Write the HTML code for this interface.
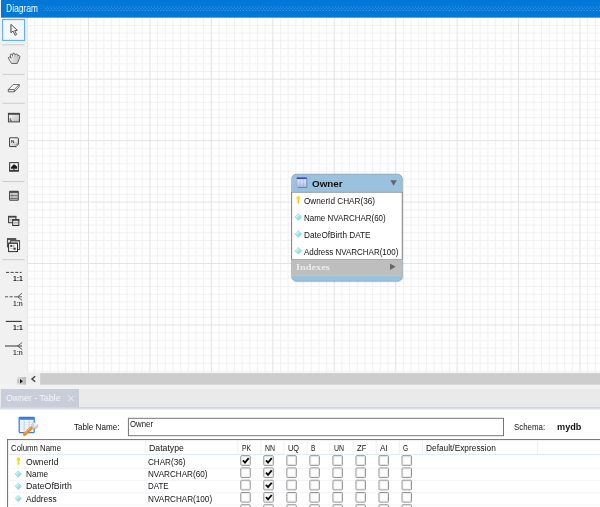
<!DOCTYPE html>
<html lang="en">
<head>
<meta charset="utf-8">
<title>Diagram - Owner - Table</title>
<style>
html,body{margin:0;padding:0;background:#fff;}
body{width:600px;height:507px;position:relative;overflow:hidden;font-family:"Liberation Sans",sans-serif;}
#bg{position:absolute;left:0;top:0;width:600px;height:507px;display:block;}
.t{position:absolute;white-space:pre;line-height:12px;height:12px;transform-origin:0 0;font-family:"Liberation Sans",sans-serif;}
.grp{position:absolute;left:0;top:0;width:0;height:0;will-change:transform;}
</style>
</head>
<body>
<svg id="bg" width="600" height="507" viewBox="0 0 600 507"><defs>
<linearGradient id="gLayer" x1="0" y1="0" x2="1" y2="1"><stop offset="0" stop-color="#ffffff"/><stop offset="1" stop-color="#b8b8b8"/></linearGradient>
<linearGradient id="gIcon" x1="0" y1="0" x2="0" y2="1"><stop offset="0" stop-color="#ffffff"/><stop offset="1" stop-color="#d0d0d0"/></linearGradient>
<linearGradient id="gHand" x1="0" y1="0" x2="1" y2="0.3"><stop offset="0" stop-color="#ffffff"/><stop offset="1" stop-color="#c4c4c4"/></linearGradient>
<linearGradient id="gTblHead" x1="0" y1="0" x2="0" y2="1"><stop offset="0" stop-color="#1e6ee0"/><stop offset="1" stop-color="#5aa2f2"/></linearGradient>
<linearGradient id="gNote" x1="0" y1="0" x2="1" y2="1"><stop offset="0.3" stop-color="#ffffff"/><stop offset="1" stop-color="#bdbdbd"/></linearGradient>
<linearGradient id="gTIcon" x1="0" y1="0" x2="1" y2="1"><stop offset="0" stop-color="#f6f6f6"/><stop offset="1" stop-color="#bcbcbc"/></linearGradient>
<linearGradient id="gExp" x1="0" y1="0" x2="1" y2="0"><stop offset="0" stop-color="#e6e6e6"/><stop offset="0.6" stop-color="#c6c6c6"/><stop offset="1" stop-color="#bcbcbc"/></linearGradient>
<linearGradient id="gBand" x1="0" y1="0" x2="0" y2="1"><stop offset="0" stop-color="#cdd3df"/><stop offset="1" stop-color="#e4e8ef"/></linearGradient>
<linearGradient id="gDia" x1="0" y1="0" x2="1" y2="1"><stop offset="0" stop-color="#f2ffff"/><stop offset="1" stop-color="#52d4da"/></linearGradient>
<linearGradient id="gKey" x1="0" y1="0" x2="1" y2="0"><stop offset="0" stop-color="#fff27a"/><stop offset="0.55" stop-color="#ffdd22"/><stop offset="1" stop-color="#e9b400"/></linearGradient>
<linearGradient id="gTbl" x1="0" y1="0" x2="0" y2="1"><stop offset="0" stop-color="#eef4ff"/><stop offset="1" stop-color="#a9c0e6"/></linearGradient>
<clipPath id="entClip"><rect x="291.5" y="174.1" width="110.9" height="107.2" rx="5" ry="5"/></clipPath>
</defs><g id="s-canvas"><rect x="27" y="17" width="573" height="355.4" fill="#ffffff" /><line x1="27.5" y1="17" x2="27.5" y2="372.4" stroke="#e6e6e6" stroke-width="1"/><path d="M34.74 17.0V372.4M42.42 17.0V372.4M50.10 17.0V372.4M57.78 17.0V372.4M65.46 17.0V372.4M73.14 17.0V372.4M80.82 17.0V372.4M96.18 17.0V372.4M103.86 17.0V372.4M111.54 17.0V372.4M119.22 17.0V372.4M126.90 17.0V372.4M134.58 17.0V372.4M142.26 17.0V372.4M157.62 17.0V372.4M165.30 17.0V372.4M172.98 17.0V372.4M180.66 17.0V372.4M188.34 17.0V372.4M196.02 17.0V372.4M203.70 17.0V372.4M219.06 17.0V372.4M226.74 17.0V372.4M234.42 17.0V372.4M242.10 17.0V372.4M249.78 17.0V372.4M257.46 17.0V372.4M265.14 17.0V372.4M280.50 17.0V372.4M288.18 17.0V372.4M295.86 17.0V372.4M303.54 17.0V372.4M311.22 17.0V372.4M318.90 17.0V372.4M326.58 17.0V372.4M341.94 17.0V372.4M349.62 17.0V372.4M357.30 17.0V372.4M364.98 17.0V372.4M372.66 17.0V372.4M380.34 17.0V372.4M388.02 17.0V372.4M403.38 17.0V372.4M411.06 17.0V372.4M418.74 17.0V372.4M426.42 17.0V372.4M434.10 17.0V372.4M441.78 17.0V372.4M449.46 17.0V372.4M464.82 17.0V372.4M472.50 17.0V372.4M480.18 17.0V372.4M487.86 17.0V372.4M495.54 17.0V372.4M503.22 17.0V372.4M510.90 17.0V372.4M526.26 17.0V372.4M533.94 17.0V372.4M541.62 17.0V372.4M549.30 17.0V372.4M556.98 17.0V372.4M564.66 17.0V372.4M572.34 17.0V372.4M587.70 17.0V372.4M595.38 17.0V372.4M27.0 25.44H600M27.0 33.12H600M27.0 40.80H600M27.0 48.48H600M27.0 56.16H600M27.0 63.84H600M27.0 71.52H600M27.0 86.88H600M27.0 94.56H600M27.0 102.24H600M27.0 109.92H600M27.0 117.60H600M27.0 125.28H600M27.0 132.96H600M27.0 148.32H600M27.0 156.00H600M27.0 163.68H600M27.0 171.36H600M27.0 179.04H600M27.0 186.72H600M27.0 194.40H600M27.0 209.76H600M27.0 217.44H600M27.0 225.12H600M27.0 232.80H600M27.0 240.48H600M27.0 248.16H600M27.0 255.84H600M27.0 271.20H600M27.0 278.88H600M27.0 286.56H600M27.0 294.24H600M27.0 301.92H600M27.0 309.60H600M27.0 317.28H600M27.0 332.64H600M27.0 340.32H600M27.0 348.00H600M27.0 355.68H600M27.0 363.36H600M27.0 371.04H600" stroke="#efefef" stroke-width="0.9" fill="none"/><path d="M88.50 17.0V372.4M149.94 17.0V372.4M211.38 17.0V372.4M272.82 17.0V372.4M334.26 17.0V372.4M395.70 17.0V372.4M457.14 17.0V372.4M518.58 17.0V372.4M580.02 17.0V372.4M27.0 79.20H600M27.0 140.64H600M27.0 202.08H600M27.0 263.52H600M27.0 324.96H600" stroke="#e3e3e3" stroke-width="1" fill="none"/></g><g id="s-toolbar"><rect x="0" y="17" width="27" height="367.8" fill="#f1f1f1" /><rect x="0" y="0" width="1" height="17" fill="#f0f0f0" /><rect x="2.6" y="19.6" width="22" height="20.8" fill="#f4f8fd" stroke="#55a7f3" stroke-width="1"/><path d="M10.9 24.3V32.7L13.1 31.1L15.1 35.3L16.6 34.5L14.7 30.6L17.4 30.3Z" fill="#f4f4f4" stroke="#3c3c3c" stroke-width="0.85" stroke-linejoin="round"/><path d="M11.0 25.2V32" stroke="#8a8a8a" stroke-width="0.9"/><line x1="2.4" y1="44.8" x2="24.6" y2="44.8" stroke="#cfcfcf" stroke-width="1.1"/><line x1="2.4" y1="74.4" x2="24.6" y2="74.4" stroke="#cfcfcf" stroke-width="1.1"/><line x1="2.4" y1="103.3" x2="24.6" y2="103.3" stroke="#cfcfcf" stroke-width="1.1"/><line x1="2.4" y1="181.5" x2="24.6" y2="181.5" stroke="#cfcfcf" stroke-width="1.1"/><line x1="2.4" y1="259.6" x2="24.6" y2="259.6" stroke="#cfcfcf" stroke-width="1.1"/><path d="M8.2 57.7L9.5 56.8L10.9 58.3L10.2 54.7Q10.8 53.6 11.9 54.2L12.5 55.6L12.9 53.5Q14.0 52.7 14.8 53.6L15.1 54.9Q16.5 53.5 17.6 54.5L17.8 55.5Q19.3 55.0 19.9 56.3L19.4 58.6L17.2 63.5H11.6L9.6 60.4Z" fill="url(#gHand)" stroke="#4a4a4a" stroke-width="0.8" stroke-linejoin="round"/><path d="M12.5 55.6L12.9 58.2M15.1 54.9L15.0 57.8M17.8 55.5L17.2 58" stroke="#9a9a9a" stroke-width="0.5" fill="none"/><path d="M8.3 89.6L13.2 84.6H19.2L14.3 89.6Z" fill="#fafafa" stroke="#444" stroke-width="0.8" stroke-linejoin="round"/><path d="M8.3 89.6V91.8H14.3V89.6M14.3 91.8L19.2 86.8V84.6" fill="none" stroke="#444" stroke-width="0.8" stroke-linejoin="round"/><rect x="8.4" y="113.3" width="11" height="8.6" fill="url(#gLayer)" stroke="#333" stroke-width="0.9"/><path d="M8.4 114.1H19.4" stroke="#333" stroke-width="1.2"/><path d="M10.2 118.2V120.6H11.6" stroke="#333" stroke-width="0.8" fill="none"/><path d="M9.6 137.8H17.6Q18.4 137.8 18.4 138.6V144.2L16.1 146.6H9.6Z" fill="url(#gNote)" stroke="#3c3c3c" stroke-width="1.0" stroke-linejoin="round"/><path d="M18.4 144.2H16.1V146.6" fill="#e8e8e8" stroke="#555" stroke-width="0.6"/><line x1="10.8" y1="144" x2="15.2" y2="144" stroke="#b5b5b5" stroke-width="0.6"/><line x1="10.8" y1="145" x2="15.2" y2="145" stroke="#c2c2c2" stroke-width="0.6"/><rect x="9.6" y="162.6" width="8.8" height="8.6" fill="#ffffff" stroke="#3a3a3a" stroke-width="1.0"/><rect x="10.5" y="163.5" width="7" height="6.4" fill="none" stroke="#b8b8b8" stroke-width="0.5"/><path d="M11.0 168.7C10.5 167.2 11.4 166.2 12.2 166.2C12.4 164.0 15.4 163.7 15.9 165.8C17.1 165.9 17.5 167.6 16.9 168.7Z" fill="#1a1a1a"/><rect x="13.5" y="168.4" width="1" height="1.7" fill="#1a1a1a"/><line x1="9.6" y1="170.6" x2="18.4" y2="170.6" stroke="#3a3a3a" stroke-width="1.3"/><rect x="9.6" y="191.4" width="8.7" height="8.9" rx="0.7" fill="url(#gTIcon)" stroke="#454545" stroke-width="1.1"/><rect x="9.6" y="191.2" width="8.7" height="1.7" fill="#4a4a4a" /><line x1="10.4" y1="194.2" x2="17.6" y2="194.2" stroke="#b0b0b0" stroke-width="0.6"/><line x1="10.4" y1="197" x2="17.6" y2="197" stroke="#a8a8a8" stroke-width="0.6"/><line x1="10.4" y1="195.6" x2="17.6" y2="195.6" stroke="#555" stroke-width="0.8"/><line x1="10.4" y1="198.5" x2="17.6" y2="198.5" stroke="#555" stroke-width="0.8"/><line x1="12" y1="193.2" x2="12" y2="199.8" stroke="#777" stroke-width="0.7"/><rect x="8.6" y="216.4" width="7.3" height="6.3" fill="#ececec" stroke="#333" stroke-width="1.0"/><rect x="8.2" y="215.9" width="8.1" height="1.7" fill="#444" /><line x1="9.6" y1="219.3" x2="12.2" y2="219.3" stroke="#999" stroke-width="0.6"/><line x1="9.6" y1="220.7" x2="12.2" y2="220.7" stroke="#999" stroke-width="0.6"/><rect x="12.7" y="219.6" width="6.1" height="5.9" fill="#f2f2f2" stroke="#2e2e2e" stroke-width="1.0"/><rect x="12.2" y="219.1" width="7.1" height="1.7" fill="#3c3c3c" /><line x1="13.6" y1="222.4" x2="17.9" y2="222.4" stroke="#888" stroke-width="0.7"/><line x1="13.6" y1="223.9" x2="17.9" y2="223.9" stroke="#999" stroke-width="0.7"/><rect x="7.4" y="238.5" width="8.3" height="8.4" fill="#dcdcdc" stroke="#3a3a3a" stroke-width="0.9"/><rect x="7" y="238" width="9.1" height="2" fill="#555" /><rect x="10.7" y="240.6" width="8.9" height="8.8" fill="#ededed" stroke="#3a3a3a" stroke-width="0.9"/><rect x="10.3" y="240.1" width="9.7" height="1.3" fill="#555" /><rect x="8.6" y="243.2" width="8.9" height="8.4" fill="#f4f4f4" stroke="#2c2c2c" stroke-width="1.0"/><rect x="8.2" y="242.7" width="9.7" height="1.2" fill="#444" /><rect x="10.3" y="245.1" width="1.9" height="1.7" fill="#333" /><rect x="12.6" y="245.5" width="1.8" height="1" fill="#666" /><rect x="13.4" y="247.7" width="2.4" height="2" fill="#444" /><line x1="10.2" y1="248.6" x2="13" y2="248.6" stroke="#aaa" stroke-width="0.6"/><line x1="6" y1="272.4" x2="21.6" y2="272.4" stroke="#444" stroke-width="1" stroke-dasharray="3.1 1.5"/><line x1="5" y1="296.8" x2="19" y2="296.8" stroke="#555" stroke-width="1" stroke-dasharray="3.1 1.5"/><path d="M22 293.2L17.6 296.8L22 300.3M17.6 296.8H22" fill="none" stroke="#555" stroke-width="0.9"/><line x1="5.8" y1="321.4" x2="21.6" y2="321.4" stroke="#333" stroke-width="1.1"/><line x1="5" y1="346" x2="22" y2="346" stroke="#555" stroke-width="1.2"/><path d="M22.2 342.5L17.5 346L22.2 349.5" fill="none" stroke="#555" stroke-width="0.9"/><rect x="16.6" y="377" width="9.5" height="7.8" fill="url(#gExp)" /><rect x="17.6" y="379.4" width="1" height="3.6" fill="#a8a8a8" /><path d="M20.0 379.0L22.9 381.2L20.0 383.4Z" fill="#111"/></g><g id="s-header"><rect x="1" y="0" width="599" height="17.65" fill="#0078d7" /><line x1="43.4" y1="7.0" x2="600" y2="7.0" stroke="#459eea" stroke-width="1.05" stroke-dasharray="1.1 1.97"/><line x1="44.935" y1="8.75" x2="600" y2="8.75" stroke="#459eea" stroke-width="1.05" stroke-dasharray="1.1 1.97"/><line x1="43.4" y1="10.5" x2="600" y2="10.5" stroke="#459eea" stroke-width="1.05" stroke-dasharray="1.1 1.97"/></g><g id="s-scroll"><rect x="27" y="372.4" width="573" height="12.4" fill="#f0f0f0" /><rect x="40.2" y="373.1" width="559.8" height="11.7" fill="#cdcdcd" /><path d="M35.2 376.3L32.0 379.0L35.2 381.7" fill="none" stroke="#444" stroke-width="1.5"/><rect x="0" y="384.8" width="600" height="4.2" fill="#f2f2f2" /></g><g id="s-tabs"><rect x="0" y="389" width="600" height="18" fill="#eaeaea" /><rect x="1" y="389" width="78" height="18" fill="#c8cdd9" /><rect x="0" y="407" width="600" height="2.8" fill="url(#gBand)" /><path d="M68.3 395.6L73.9 401.2M73.9 395.6L68.3 401.2" stroke="#eceff4" stroke-width="0.95" fill="none"/></g><g id="s-entity"><rect x="292.5" y="175.29999999999998" width="110.89999999999998" height="107.20000000000002" rx="5.2" fill="#000" opacity="0.08"/><g clip-path="url(#entClip)"><rect x="291.5" y="174.1" width="110.9" height="18.1" fill="#9ac1dd" /><rect x="291.5" y="192.2" width="110.9" height="67.1" fill="#ffffff" /><rect x="291.5" y="259.3" width="110.9" height="16.4" fill="#bebebe" /><rect x="291.5" y="275.7" width="110.9" height="5.6" fill="#9ac1dd" /></g><line x1="291.5" y1="192.4" x2="402.4" y2="192.4" stroke="#8f8f8f" stroke-width="0.8"/><line x1="291.5" y1="259.5" x2="402.4" y2="259.5" stroke="#a2a2a2" stroke-width="0.8"/><rect x="291.5" y="174.1" width="110.89999999999998" height="107.20000000000002" rx="5" fill="none" stroke="#6f7f8c" stroke-width="0.8" opacity="0.55"/><line x1="291.6" y1="192.2" x2="291.6" y2="259.3" stroke="#7a7a7a" stroke-width="0.9"/><line x1="402.3" y1="192.2" x2="402.3" y2="259.3" stroke="#8a8a8a" stroke-width="0.9"/><rect x="297.6" y="178.2" width="9.7" height="9.7" fill="#4f6488" rx="0.8" opacity="0.75"/><rect x="296.9" y="177.5" width="9.6" height="9.6" rx="0.6" fill="url(#gTbl)" stroke="#8fa3cc" stroke-width="0.5"/><rect x="296.7" y="177.3" width="10" height="1.8" fill="#3f46dc" /><line x1="300.1" y1="179.3" x2="300.1" y2="186.9" stroke="#93a8d6" stroke-width="0.6"/><line x1="303.3" y1="179.3" x2="303.3" y2="186.9" stroke="#93a8d6" stroke-width="0.6"/><path d="M390.3 180.2H396.9L393.6 185.8Z" fill="#666"/><path d="M390.0 263.6L395.7 266.8L390.0 270.0Z" fill="#686868"/><rect x="296.95" y="199.2" width="1.9" height="4.4" fill="url(#gKey)"/><ellipse cx="297.9" cy="198" rx="1.95" ry="2.0" fill="url(#gKey)"/><rect x="298.5" y="201.6" width="0.9" height="0.8" fill="#e9b800"/><path d="M295 217L298.3 213.7L301.6 217L298.3 220.3Z" fill="url(#gDia)" stroke="#74c4ca" stroke-width="0.55"/><path d="M296.2 216.8L298.3 214.7" stroke="#ffffff" stroke-width="0.7" opacity="0.8"/><path d="M295 233.9L298.3 230.6L301.6 233.9L298.3 237.2Z" fill="url(#gDia)" stroke="#74c4ca" stroke-width="0.55"/><path d="M296.2 233.7L298.3 231.6" stroke="#ffffff" stroke-width="0.7" opacity="0.8"/><path d="M295 250.8L298.3 247.5L301.6 250.8L298.3 254.1Z" fill="url(#gDia)" stroke="#74c4ca" stroke-width="0.55"/><path d="M296.2 250.6L298.3 248.5" stroke="#ffffff" stroke-width="0.7" opacity="0.8"/></g><g id="s-panel"><rect x="0" y="409.8" width="600" height="97.2" fill="#ffffff" /><rect x="19.2" y="417.5" width="15" height="15.1" rx="0.8" fill="#f6f9ff" stroke="#3a80e2" stroke-width="1.3"/><rect x="18.8" y="417.1" width="15.8" height="2.8" fill="url(#gTblHead)" rx="0.8"/><line x1="24.2" y1="420.6" x2="24.2" y2="431.8" stroke="#a9c6ee" stroke-width="0.9"/><line x1="29.2" y1="420.6" x2="29.2" y2="431.8" stroke="#a9c6ee" stroke-width="0.9"/><line x1="20.4" y1="422.3" x2="33.2" y2="422.3" stroke="#cfe0f6" stroke-width="0.8"/><line x1="20.4" y1="424.6" x2="33.2" y2="424.6" stroke="#cfe0f6" stroke-width="0.8"/><line x1="20.4" y1="426.9" x2="33.2" y2="426.9" stroke="#cfe0f6" stroke-width="0.8"/><line x1="20.4" y1="429.2" x2="33.2" y2="429.2" stroke="#cfe0f6" stroke-width="0.8"/><path d="M24.5 434.4L31.4 427.9" stroke="#f08a1c" stroke-width="3.3" stroke-linecap="round"/><path d="M24.3 433.6L30.6 427.7" stroke="#ffb45a" stroke-width="0.8" stroke-linecap="round"/><circle cx="34.6" cy="425.7" r="3.0" fill="#d4d4d4" stroke="#a8a8a8" stroke-width="0.6"/><path d="M34.6 425.6L37.4 422.4" stroke="#ffffff" stroke-width="1.9"/><path d="M32.4 424.4Q33.2 423 34.6 423" stroke="#ffffff" stroke-width="0.7" fill="none"/><rect x="128.4" y="418.3" width="375.1" height="17.4" fill="#ffffff" stroke="#6f6f6f" stroke-width="0.95"/><line x1="7" y1="439.6" x2="600" y2="439.6" stroke="#666666" stroke-width="0.95"/><line x1="7.6" y1="439.3" x2="7.6" y2="507" stroke="#6a6a6a" stroke-width="1"/><line x1="145.3" y1="440.4" x2="145.3" y2="454.4" stroke="#e9eff9" stroke-width="1"/><line x1="237.8" y1="440.4" x2="237.8" y2="454.4" stroke="#e9eff9" stroke-width="1"/><line x1="261" y1="440.4" x2="261" y2="454.4" stroke="#e9eff9" stroke-width="1"/><line x1="284" y1="440.4" x2="284" y2="454.4" stroke="#e9eff9" stroke-width="1"/><line x1="307" y1="440.4" x2="307" y2="454.4" stroke="#e9eff9" stroke-width="1"/><line x1="330" y1="440.4" x2="330" y2="454.4" stroke="#e9eff9" stroke-width="1"/><line x1="353" y1="440.4" x2="353" y2="454.4" stroke="#e9eff9" stroke-width="1"/><line x1="376.2" y1="440.4" x2="376.2" y2="454.4" stroke="#e9eff9" stroke-width="1"/><line x1="399.2" y1="440.4" x2="399.2" y2="454.4" stroke="#e9eff9" stroke-width="1"/><line x1="422.5" y1="440.4" x2="422.5" y2="454.4" stroke="#e9eff9" stroke-width="1"/><line x1="537.6" y1="440.4" x2="537.6" y2="454.4" stroke="#e9eff9" stroke-width="1"/><line x1="8" y1="454.6" x2="600" y2="454.6" stroke="#dfe8f6" stroke-width="1"/><line x1="8" y1="468.3" x2="600" y2="468.3" stroke="#f2f4f9" stroke-width="1"/><line x1="8" y1="480.4" x2="600" y2="480.4" stroke="#f2f4f9" stroke-width="1"/><line x1="8" y1="492.7" x2="600" y2="492.7" stroke="#f2f4f9" stroke-width="1"/><line x1="8" y1="504.9" x2="600" y2="504.9" stroke="#f2f4f9" stroke-width="1"/><rect x="17.25" y="460.4" width="1.9" height="4.4" fill="url(#gKey)"/><ellipse cx="18.2" cy="459.2" rx="1.95" ry="2.0" fill="url(#gKey)"/><rect x="18.8" y="462.8" width="0.9" height="0.8" fill="#e9b800"/><path d="M15.1 474L18.2 470.9L21.3 474L18.2 477.1Z" fill="url(#gDia)" stroke="#74c4ca" stroke-width="0.55"/><path d="M16.3 473.8L18.2 471.9" stroke="#ffffff" stroke-width="0.7" opacity="0.8"/><path d="M15.1 486.3L18.2 483.2L21.3 486.3L18.2 489.4Z" fill="url(#gDia)" stroke="#74c4ca" stroke-width="0.55"/><path d="M16.3 486.1L18.2 484.2" stroke="#ffffff" stroke-width="0.7" opacity="0.8"/><path d="M15.1 498.5L18.2 495.4L21.3 498.5L18.2 501.6Z" fill="url(#gDia)" stroke="#74c4ca" stroke-width="0.55"/><path d="M16.3 498.3L18.2 496.4" stroke="#ffffff" stroke-width="0.7" opacity="0.8"/><rect x="240.8" y="455.7" width="9.4" height="9.6" rx="0.8" fill="#ffffff" stroke="#8e8e8e" stroke-width="1"/><rect x="241.7" y="456.6" width="7.6" height="7.8" rx="0.5" fill="none" stroke="#dcdcdc" stroke-width="0.6"/><path d="M242.9 460.4L245 462.6L248.7 458.2" fill="none" stroke="#0a0a0a" stroke-width="1.9"/><rect x="263.84" y="455.7" width="9.4" height="9.6" rx="0.8" fill="#ffffff" stroke="#8e8e8e" stroke-width="1"/><rect x="264.74" y="456.6" width="7.6" height="7.8" rx="0.5" fill="none" stroke="#dcdcdc" stroke-width="0.6"/><path d="M265.94 460.4L268.04 462.6L271.74 458.2" fill="none" stroke="#0a0a0a" stroke-width="1.9"/><rect x="286.88" y="455.7" width="9.4" height="9.6" rx="0.8" fill="#ffffff" stroke="#8e8e8e" stroke-width="1"/><rect x="287.78" y="456.6" width="7.6" height="7.8" rx="0.5" fill="none" stroke="#dcdcdc" stroke-width="0.6"/><rect x="309.92" y="455.7" width="9.4" height="9.6" rx="0.8" fill="#ffffff" stroke="#8e8e8e" stroke-width="1"/><rect x="310.82" y="456.6" width="7.6" height="7.8" rx="0.5" fill="none" stroke="#dcdcdc" stroke-width="0.6"/><rect x="332.96" y="455.7" width="9.4" height="9.6" rx="0.8" fill="#ffffff" stroke="#8e8e8e" stroke-width="1"/><rect x="333.86" y="456.6" width="7.6" height="7.8" rx="0.5" fill="none" stroke="#dcdcdc" stroke-width="0.6"/><rect x="356" y="455.7" width="9.4" height="9.6" rx="0.8" fill="#ffffff" stroke="#8e8e8e" stroke-width="1"/><rect x="356.9" y="456.6" width="7.6" height="7.8" rx="0.5" fill="none" stroke="#dcdcdc" stroke-width="0.6"/><rect x="379.04" y="455.7" width="9.4" height="9.6" rx="0.8" fill="#ffffff" stroke="#8e8e8e" stroke-width="1"/><rect x="379.94" y="456.6" width="7.6" height="7.8" rx="0.5" fill="none" stroke="#dcdcdc" stroke-width="0.6"/><rect x="402.08" y="455.7" width="9.4" height="9.6" rx="0.8" fill="#ffffff" stroke="#8e8e8e" stroke-width="1"/><rect x="402.98" y="456.6" width="7.6" height="7.8" rx="0.5" fill="none" stroke="#dcdcdc" stroke-width="0.6"/><rect x="240.8" y="467.97" width="9.4" height="9.6" rx="0.8" fill="#ffffff" stroke="#8e8e8e" stroke-width="1"/><rect x="241.7" y="468.87" width="7.6" height="7.8" rx="0.5" fill="none" stroke="#dcdcdc" stroke-width="0.6"/><rect x="263.84" y="467.97" width="9.4" height="9.6" rx="0.8" fill="#ffffff" stroke="#8e8e8e" stroke-width="1"/><rect x="264.74" y="468.87" width="7.6" height="7.8" rx="0.5" fill="none" stroke="#dcdcdc" stroke-width="0.6"/><path d="M265.94 472.67L268.04 474.87L271.74 470.47" fill="none" stroke="#0a0a0a" stroke-width="1.9"/><rect x="286.88" y="467.97" width="9.4" height="9.6" rx="0.8" fill="#ffffff" stroke="#8e8e8e" stroke-width="1"/><rect x="287.78" y="468.87" width="7.6" height="7.8" rx="0.5" fill="none" stroke="#dcdcdc" stroke-width="0.6"/><rect x="309.92" y="467.97" width="9.4" height="9.6" rx="0.8" fill="#ffffff" stroke="#8e8e8e" stroke-width="1"/><rect x="310.82" y="468.87" width="7.6" height="7.8" rx="0.5" fill="none" stroke="#dcdcdc" stroke-width="0.6"/><rect x="332.96" y="467.97" width="9.4" height="9.6" rx="0.8" fill="#ffffff" stroke="#8e8e8e" stroke-width="1"/><rect x="333.86" y="468.87" width="7.6" height="7.8" rx="0.5" fill="none" stroke="#dcdcdc" stroke-width="0.6"/><rect x="356" y="467.97" width="9.4" height="9.6" rx="0.8" fill="#ffffff" stroke="#8e8e8e" stroke-width="1"/><rect x="356.9" y="468.87" width="7.6" height="7.8" rx="0.5" fill="none" stroke="#dcdcdc" stroke-width="0.6"/><rect x="379.04" y="467.97" width="9.4" height="9.6" rx="0.8" fill="#ffffff" stroke="#8e8e8e" stroke-width="1"/><rect x="379.94" y="468.87" width="7.6" height="7.8" rx="0.5" fill="none" stroke="#dcdcdc" stroke-width="0.6"/><rect x="402.08" y="467.97" width="9.4" height="9.6" rx="0.8" fill="#ffffff" stroke="#8e8e8e" stroke-width="1"/><rect x="402.98" y="468.87" width="7.6" height="7.8" rx="0.5" fill="none" stroke="#dcdcdc" stroke-width="0.6"/><rect x="240.8" y="480.24" width="9.4" height="9.6" rx="0.8" fill="#ffffff" stroke="#8e8e8e" stroke-width="1"/><rect x="241.7" y="481.14" width="7.6" height="7.8" rx="0.5" fill="none" stroke="#dcdcdc" stroke-width="0.6"/><rect x="263.84" y="480.24" width="9.4" height="9.6" rx="0.8" fill="#ffffff" stroke="#8e8e8e" stroke-width="1"/><rect x="264.74" y="481.14" width="7.6" height="7.8" rx="0.5" fill="none" stroke="#dcdcdc" stroke-width="0.6"/><path d="M265.94 484.94L268.04 487.14L271.74 482.74" fill="none" stroke="#0a0a0a" stroke-width="1.9"/><rect x="286.88" y="480.24" width="9.4" height="9.6" rx="0.8" fill="#ffffff" stroke="#8e8e8e" stroke-width="1"/><rect x="287.78" y="481.14" width="7.6" height="7.8" rx="0.5" fill="none" stroke="#dcdcdc" stroke-width="0.6"/><rect x="309.92" y="480.24" width="9.4" height="9.6" rx="0.8" fill="#ffffff" stroke="#8e8e8e" stroke-width="1"/><rect x="310.82" y="481.14" width="7.6" height="7.8" rx="0.5" fill="none" stroke="#dcdcdc" stroke-width="0.6"/><rect x="332.96" y="480.24" width="9.4" height="9.6" rx="0.8" fill="#ffffff" stroke="#8e8e8e" stroke-width="1"/><rect x="333.86" y="481.14" width="7.6" height="7.8" rx="0.5" fill="none" stroke="#dcdcdc" stroke-width="0.6"/><rect x="356" y="480.24" width="9.4" height="9.6" rx="0.8" fill="#ffffff" stroke="#8e8e8e" stroke-width="1"/><rect x="356.9" y="481.14" width="7.6" height="7.8" rx="0.5" fill="none" stroke="#dcdcdc" stroke-width="0.6"/><rect x="379.04" y="480.24" width="9.4" height="9.6" rx="0.8" fill="#ffffff" stroke="#8e8e8e" stroke-width="1"/><rect x="379.94" y="481.14" width="7.6" height="7.8" rx="0.5" fill="none" stroke="#dcdcdc" stroke-width="0.6"/><rect x="402.08" y="480.24" width="9.4" height="9.6" rx="0.8" fill="#ffffff" stroke="#8e8e8e" stroke-width="1"/><rect x="402.98" y="481.14" width="7.6" height="7.8" rx="0.5" fill="none" stroke="#dcdcdc" stroke-width="0.6"/><rect x="240.8" y="492.51" width="9.4" height="9.6" rx="0.8" fill="#ffffff" stroke="#8e8e8e" stroke-width="1"/><rect x="241.7" y="493.41" width="7.6" height="7.8" rx="0.5" fill="none" stroke="#dcdcdc" stroke-width="0.6"/><rect x="263.84" y="492.51" width="9.4" height="9.6" rx="0.8" fill="#ffffff" stroke="#8e8e8e" stroke-width="1"/><rect x="264.74" y="493.41" width="7.6" height="7.8" rx="0.5" fill="none" stroke="#dcdcdc" stroke-width="0.6"/><path d="M265.94 497.21L268.04 499.41L271.74 495.01" fill="none" stroke="#0a0a0a" stroke-width="1.9"/><rect x="286.88" y="492.51" width="9.4" height="9.6" rx="0.8" fill="#ffffff" stroke="#8e8e8e" stroke-width="1"/><rect x="287.78" y="493.41" width="7.6" height="7.8" rx="0.5" fill="none" stroke="#dcdcdc" stroke-width="0.6"/><rect x="309.92" y="492.51" width="9.4" height="9.6" rx="0.8" fill="#ffffff" stroke="#8e8e8e" stroke-width="1"/><rect x="310.82" y="493.41" width="7.6" height="7.8" rx="0.5" fill="none" stroke="#dcdcdc" stroke-width="0.6"/><rect x="332.96" y="492.51" width="9.4" height="9.6" rx="0.8" fill="#ffffff" stroke="#8e8e8e" stroke-width="1"/><rect x="333.86" y="493.41" width="7.6" height="7.8" rx="0.5" fill="none" stroke="#dcdcdc" stroke-width="0.6"/><rect x="356" y="492.51" width="9.4" height="9.6" rx="0.8" fill="#ffffff" stroke="#8e8e8e" stroke-width="1"/><rect x="356.9" y="493.41" width="7.6" height="7.8" rx="0.5" fill="none" stroke="#dcdcdc" stroke-width="0.6"/><rect x="379.04" y="492.51" width="9.4" height="9.6" rx="0.8" fill="#ffffff" stroke="#8e8e8e" stroke-width="1"/><rect x="379.94" y="493.41" width="7.6" height="7.8" rx="0.5" fill="none" stroke="#dcdcdc" stroke-width="0.6"/><rect x="402.08" y="492.51" width="9.4" height="9.6" rx="0.8" fill="#ffffff" stroke="#8e8e8e" stroke-width="1"/><rect x="402.98" y="493.41" width="7.6" height="7.8" rx="0.5" fill="none" stroke="#dcdcdc" stroke-width="0.6"/><rect x="240.8" y="504.78" width="9.4" height="9.6" rx="0.8" fill="#ffffff" stroke="#8e8e8e" stroke-width="1"/><rect x="241.7" y="505.68" width="7.6" height="7.8" rx="0.5" fill="none" stroke="#dcdcdc" stroke-width="0.6"/><rect x="263.84" y="504.78" width="9.4" height="9.6" rx="0.8" fill="#ffffff" stroke="#8e8e8e" stroke-width="1"/><rect x="264.74" y="505.68" width="7.6" height="7.8" rx="0.5" fill="none" stroke="#dcdcdc" stroke-width="0.6"/><rect x="286.88" y="504.78" width="9.4" height="9.6" rx="0.8" fill="#ffffff" stroke="#8e8e8e" stroke-width="1"/><rect x="287.78" y="505.68" width="7.6" height="7.8" rx="0.5" fill="none" stroke="#dcdcdc" stroke-width="0.6"/><rect x="309.92" y="504.78" width="9.4" height="9.6" rx="0.8" fill="#ffffff" stroke="#8e8e8e" stroke-width="1"/><rect x="310.82" y="505.68" width="7.6" height="7.8" rx="0.5" fill="none" stroke="#dcdcdc" stroke-width="0.6"/><rect x="332.96" y="504.78" width="9.4" height="9.6" rx="0.8" fill="#ffffff" stroke="#8e8e8e" stroke-width="1"/><rect x="333.86" y="505.68" width="7.6" height="7.8" rx="0.5" fill="none" stroke="#dcdcdc" stroke-width="0.6"/><rect x="356" y="504.78" width="9.4" height="9.6" rx="0.8" fill="#ffffff" stroke="#8e8e8e" stroke-width="1"/><rect x="356.9" y="505.68" width="7.6" height="7.8" rx="0.5" fill="none" stroke="#dcdcdc" stroke-width="0.6"/><rect x="379.04" y="504.78" width="9.4" height="9.6" rx="0.8" fill="#ffffff" stroke="#8e8e8e" stroke-width="1"/><rect x="379.94" y="505.68" width="7.6" height="7.8" rx="0.5" fill="none" stroke="#dcdcdc" stroke-width="0.6"/><rect x="402.08" y="504.78" width="9.4" height="9.6" rx="0.8" fill="#ffffff" stroke="#8e8e8e" stroke-width="1"/><rect x="402.98" y="505.68" width="7.6" height="7.8" rx="0.5" fill="none" stroke="#dcdcdc" stroke-width="0.6"/></g></svg>
<div class="grp" id="header">
<span class="t" style="left:6.40px;top:2.84px;font-size:10.0px;color:#ffffff;transform:scaleX(0.8466)">Diagram</span>
</div>
<div class="grp" id="toolbar">
<span class="t" style="left:12.90px;top:273.23px;font-size:8.0px;color:#1c1c1c;transform:scaleX(0.8476);font-weight:bold">1:1</span>
<span class="t" style="left:12.90px;top:298.23px;font-size:8.0px;color:#4c4c4c;transform:scaleX(0.8167);font-weight:bold">1:n</span>
<span class="t" style="left:12.90px;top:322.23px;font-size:8.0px;color:#1c1c1c;transform:scaleX(0.8476);font-weight:bold">1:1</span>
<span class="t" style="left:12.90px;top:347.23px;font-size:8.0px;color:#4c4c4c;transform:scaleX(0.8167);font-weight:bold">1:n</span>
<span class="t" style="left:10.90px;top:135.71px;font-size:4.3px;color:#222;transform:scaleX(1.0935);font-weight:bold">N</span>
</div>
<div class="grp" id="entity">
<span class="t" style="left:312.00px;top:177.88px;font-size:9.3px;color:#111;transform:scaleX(1.0575);font-weight:bold">Owner</span>
<span class="t" style="left:303.90px;top:195.27px;font-size:8.45px;color:#141414;transform:scaleX(0.9705)">OwnerId CHAR(36)</span>
<span class="t" style="left:303.90px;top:211.97px;font-size:8.45px;color:#141414;transform:scaleX(0.9435)">Name NVARCHAR(60)</span>
<span class="t" style="left:303.90px;top:228.97px;font-size:8.45px;color:#141414;transform:scaleX(0.9749)">DateOfBirth DATE</span>
<span class="t" style="left:303.90px;top:245.77px;font-size:8.45px;color:#141414;transform:scaleX(0.9457)">Address NVARCHAR(100)</span>
<span class="t" style="left:296.20px;top:260.89px;font-size:9.2px;color:#ececec;transform:scaleX(1.1220);font-weight:bold;font-family:'Liberation Serif', serif">Indexes</span>
</div>
<div class="grp" id="tabs">
<span class="t" style="left:6.20px;top:391.84px;font-size:9.7px;color:#f6f8fb;transform:scaleX(0.9048)">Owner - Table</span>
</div>
<div class="grp" id="panel">
<span class="t" style="left:74.00px;top:420.77px;font-size:8.45px;color:#141414;transform:scaleX(0.9604)">Table Name:</span>
<span class="t" style="left:130.00px;top:418.07px;font-size:8.45px;color:#141414;transform:scaleX(0.9252)">Owner</span>
<span class="t" style="left:514.40px;top:421.07px;font-size:8.45px;color:#141414;transform:scaleX(0.9370)">Schema:</span>
<span class="t" style="left:556.60px;top:421.07px;font-size:8.45px;color:#111;transform:scaleX(1.0837);font-weight:bold">mydb</span>
<span class="t" style="left:11.00px;top:442.07px;font-size:8.45px;color:#141414;transform:scaleX(0.9270)">Column Name</span>
<span class="t" style="left:148.70px;top:442.07px;font-size:8.45px;color:#141414;transform:scaleX(1.0331)">Datatype</span>
<span class="t" style="left:241.70px;top:442.07px;font-size:8.45px;color:#141414;transform:scaleX(0.8078)">PK</span>
<span class="t" style="left:265.00px;top:442.07px;font-size:8.45px;color:#141414;transform:scaleX(0.8205)">NN</span>
<span class="t" style="left:288.00px;top:442.07px;font-size:8.45px;color:#141414;transform:scaleX(0.8691)">UQ</span>
<span class="t" style="left:310.90px;top:442.07px;font-size:8.45px;color:#141414;transform:scaleX(0.7801)">B</span>
<span class="t" style="left:334.00px;top:442.07px;font-size:8.45px;color:#141414;transform:scaleX(0.8205)">UN</span>
<span class="t" style="left:356.70px;top:442.07px;font-size:8.45px;color:#141414;transform:scaleX(0.9018)">ZF</span>
<span class="t" style="left:380.00px;top:442.07px;font-size:8.45px;color:#141414;transform:scaleX(0.9769)">AI</span>
<span class="t" style="left:402.80px;top:442.07px;font-size:8.45px;color:#141414;transform:scaleX(0.7905)">G</span>
<span class="t" style="left:426.20px;top:442.07px;font-size:8.45px;color:#141414;transform:scaleX(0.9855)">Default/Expression</span>
<span class="t" style="left:26.10px;top:456.07px;font-size:8.45px;color:#141414;transform:scaleX(1.0160)">OwnerId</span>
<span class="t" style="left:147.60px;top:456.07px;font-size:8.45px;color:#141414;transform:scaleX(0.9609)">CHAR(36)</span>
<span class="t" style="left:26.10px;top:468.07px;font-size:8.45px;color:#141414;transform:scaleX(0.9860)">Name</span>
<span class="t" style="left:147.60px;top:468.07px;font-size:8.45px;color:#141414;transform:scaleX(0.9622)">NVARCHAR(60)</span>
<span class="t" style="left:26.10px;top:480.07px;font-size:8.45px;color:#141414;transform:scaleX(1.0410)">DateOfBirth</span>
<span class="t" style="left:147.60px;top:480.07px;font-size:8.45px;color:#141414;transform:scaleX(0.9456)">DATE</span>
<span class="t" style="left:26.10px;top:493.07px;font-size:8.45px;color:#141414;transform:scaleX(0.9886)">Address</span>
<span class="t" style="left:147.60px;top:493.07px;font-size:8.45px;color:#141414;transform:scaleX(0.9650)">NVARCHAR(100)</span>
</div>
</body>
</html>
